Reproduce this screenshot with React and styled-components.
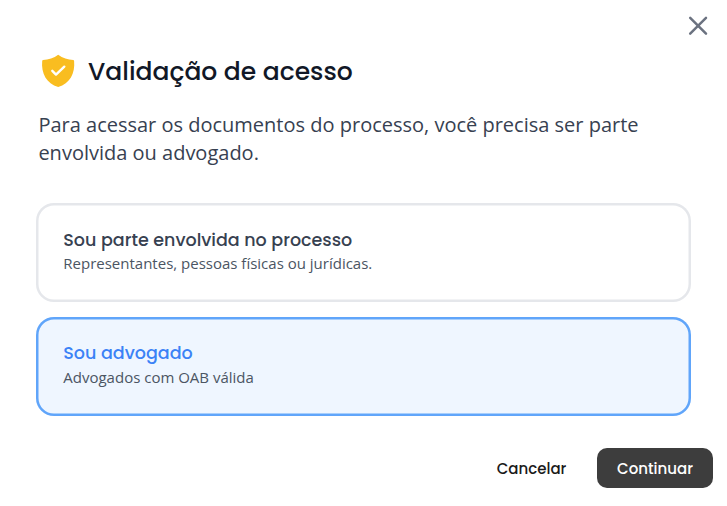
import React from "react";
import styled, { createGlobalStyle } from "styled-components";

const Global = createGlobalStyle`
  * { box-sizing: border-box; }
  body { margin: 0; background: #fff; font-family: "Open Sans", sans-serif; }
`;

const Dialog = styled.main`
  width: 727px;
  height: 506px;
  display: flex;
  flex-direction: column;
  background: #fff;
  overflow: hidden;
`;

const TopBar = styled.div`
  display: flex;
  justify-content: flex-end;
  height: 52px;
  padding: 16px 19px 0 0;
`;

const IconButton = styled.button`
  width: 20px;
  height: 20px;
  padding: 0;
  border: 0;
  background: none;
  svg { display: block; }
`;

const Header = styled.header`
  display: flex;
  align-items: center;
  height: 38px;
  padding-left: 40px;
  gap: 12px;
`;

const Fit = styled.span`
  display: block;
  width: max-content;
  white-space: nowrap;
`;

const Title = styled.h1`
  margin: 0;
  padding-top: 2px;
  font: 500 25px/38px Poppins, Inter, sans-serif;
  color: #111827;
`;

const Lead = styled.p`
  margin: 21px 0 0 38.4px;
  font-size: 20px;
  line-height: 28px;
  color: #374151;
`;

const Options = styled.div`
  display: flex;
  flex-direction: column;
  gap: 15.5px;
  margin: 36px 36.5px 0 36px;
`;

const Option = styled.button`
  height: 98.5px;
  padding: ${(p) => (p.$active ? 23 : 24)}px 27.3px 0;
  display: flex;
  flex-direction: column;
  text-align: left;
  border: 0;
  border-radius: 18px;
  box-shadow: inset 0 0 0 2.5px ${(p) => (p.$active ? "#60a5fa" : "#e5e7eb")};
  background: ${(p) => (p.$active ? "#eff6ff" : "#fff")};
`;

const OptionTitle = styled.strong`
  font: 500 17.5px/26px Poppins, Inter, sans-serif;
  color: ${(p) => (p.$active ? "#3b82f6" : "#374151")};
`;

const OptionNote = styled.span`
  margin-top: ${(p) => (p.$active ? 0 : -1)}px;
  font: 400 15px/22px "Open Sans", sans-serif;
  color: #4b5563;
`;

const Footer = styled.footer`
  display: flex;
  justify-content: flex-end;
  margin: 32.5px 14px 0 0;
`;

const Action = styled.button`
  display: flex;
  align-items: center;
  justify-content: center;
  width: ${(p) => (p.$primary ? 116 : 131)}px;
  height: 40px;
  padding: 1px 0 0;
  border: 0;
  border-radius: 10px;
  font: 500 15px/22px Poppins, Inter, sans-serif;
  color: ${(p) => (p.$primary ? "#fff" : "#1a1a1a")};
  background: ${(p) => (p.$primary ? "#3d3d3d" : "transparent")};
`;

export default function App() {
  return (
    <Dialog>
      <Global />
      <TopBar>
        <IconButton aria-label="Fechar">
          <svg width="20" height="20" viewBox="0 0 20 20" fill="none" stroke="#6b7280" strokeWidth="2.5" strokeLinecap="round">
            <path d="M2.2 1.8 18 17.6M18 1.8 2.2 17.6" />
          </svg>
        </IconButton>
      </TopBar>
      <Header>
        <svg width="36" height="38" viewBox="0 0 36 38">
          <path fill="#f9bd20" d="M18.2 2.8C22.5 6 28 7.8 33.2 8.1Q34 8.2 34.1 9C35.3 21.5 29.8 31.5 18.2 35C6.6 31.5 1 21.5 2.2 9Q2.3 8.2 3.1 8.1C8.4 7.8 13.9 6 18.2 2.8Z" />
          <path d="m12.3 18.8 3.7 3.8 8.3-7.9" fill="none" stroke="#fff" strokeWidth="2.4" strokeLinecap="round" strokeLinejoin="round" />
        </svg>
        <Title><Fit>Validação de acesso</Fit></Title>
      </Header>
      <Lead>
        <Fit>Para acessar os documentos do processo, você precisa ser parte</Fit>
        <Fit>envolvida ou advogado.</Fit>
      </Lead>
      <Options>
        <Option>
          <OptionTitle><Fit>Sou parte envolvida no processo</Fit></OptionTitle>
          <OptionNote><Fit>Representantes, pessoas físicas ou jurídicas.</Fit></OptionNote>
        </Option>
        <Option $active>
          <OptionTitle $active><Fit>Sou advogado</Fit></OptionTitle>
          <OptionNote $active><Fit>Advogados com OAB válida</Fit></OptionNote>
        </Option>
      </Options>
      <Footer>
        <Action><Fit>Cancelar</Fit></Action>
        <Action $primary><Fit>Continuar</Fit></Action>
      </Footer>
    </Dialog>
  );
}
